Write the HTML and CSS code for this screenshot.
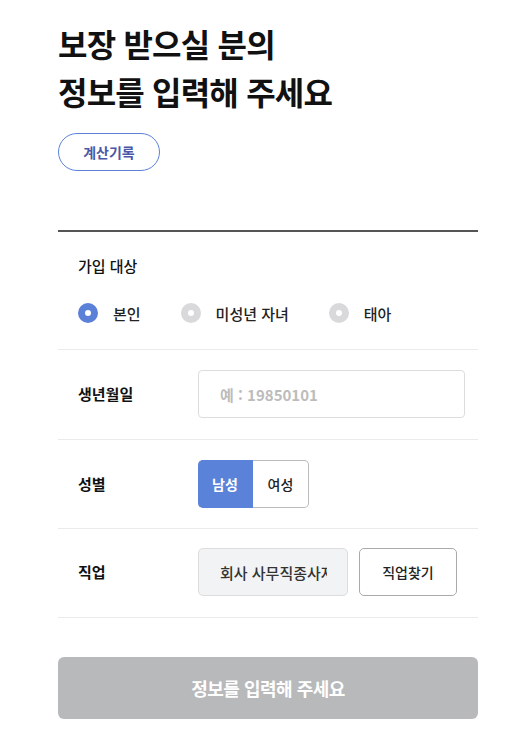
FILE: index.html
```html
<!DOCTYPE html>
<html lang="ko">
<head>
<meta charset="utf-8">
<link rel="stylesheet" href="styles.css">
</head>
<body>
<div class="page">
  <h1 class="title">보장 받으실 분의<br>정보를 입력해 주세요</h1>
  <button class="history">계산기록</button>

  <div class="form">
    <div class="row row-target">
      <div class="label">가입 대상</div>
      <div class="radios">
        <label class="radio on"><span class="dot"></span>본인</label>
        <label class="radio"><span class="dot"></span>미성년 자녀</label>
        <label class="radio"><span class="dot"></span>태아</label>
      </div>
    </div>
    <div class="row">
      <div class="label bold">생년월일</div>
      <div class="input">예 : 19850101</div>
    </div>
    <div class="row row-tight">
      <div class="label bold">성별</div>
      <div class="seg">
        <span class="seg-item active">남성</span>
        <span class="seg-item">여성</span>
      </div>
    </div>
    <div class="row row-job">
      <div class="label bold">직업</div>
      <div class="job">
        <div class="job-input"><span>회사 사무직종사자</span></div>
        <button class="job-btn">직업찾기</button>
      </div>
    </div>
  </div>

  <button class="submit">정보를 입력해 주세요</button>
</div>
</body>
</html>
```

FILE: styles.css
```css
* { box-sizing: border-box; }
html, body { margin: 0; padding: 0; background: #fff; }
body {
  font-family: "Noto Sans CJK KR", "Noto Sans", sans-serif;
  color: #111;
}
.page {
  width: 420px;
  margin-left: 58px;
  padding-top: 19px;
}
.title {
  margin: 0;
  font-size: 32px;
  line-height: 48px;
  font-weight: 700;
  color: #111;
  letter-spacing: -0.8px;
}
.history {
  margin-top: 18px;
  width: 102px;
  height: 38px;
  border: 1px solid #5b82d9;
  border-radius: 19px;
  background: #fff;
  color: #4a57a8;
  font-family: inherit;
  font-size: 14px;
  font-weight: 700;
  padding: 0;
  display: block;
}
.form {
  margin-top: 59px;
  border-top: 2px solid #555;
}
.row {
  display: flex;
  align-items: center;
  padding: 20px 0 21px 20px;
  border-bottom: 1px solid #ebebeb;
}
.row-tight { padding: 20px 0 20px 20px; }
.row-job { padding: 19px 0 21px 20px; }
.row-target {
  display: block;
  padding: 24px 0 25px 20px;
}
.label {
  width: 120px;
  flex: none;
  font-size: 15px;
  font-weight: 500;
  line-height: 20px;
  color: #111;
}
.label.bold { font-weight: 700; }
.radios {
  display: flex;
  margin-top: 26px;
  height: 22px;
  align-items: center;
}
.radio {
  display: flex;
  align-items: center;
  font-size: 15px;
  font-weight: 500;
  color: #222;
  margin-right: 40px;
}
.dot {
  width: 20px;
  height: 20px;
  border-radius: 50%;
  background: #d9d9dc;
  margin-right: 15px;
  position: relative;
}
.dot::after {
  content: "";
  position: absolute;
  left: 7px;
  top: 7px;
  width: 6px;
  height: 6px;
  border-radius: 50%;
  background: #fff;
}
.radio.on .dot { background: #5b80d8; }
.input {
  width: 267px;
  height: 48px;
  border: 1px solid #ddd;
  border-radius: 4px;
  padding-left: 21px;
  display: flex;
  align-items: center;
  font-size: 15px;
  font-weight: 700;
  color: #bcbcbc;
}
.seg {
  display: flex;
  height: 48px;
}
.seg-item {
  width: 56px;
  display: flex;
  align-items: center;
  justify-content: center;
  font-size: 14px;
  font-weight: 500;
  border: 1px solid #bbb;
  color: #222;
  border-radius: 0 5px 5px 0;
  border-left: none;
}
.seg-item.active {
  width: 55px;
  background: #5b82d9;
  border-color: #5b82d9;
  color: #fff;
  font-weight: 700;
  border-radius: 5px 0 0 5px;
}
.job {
  display: flex;
  gap: 11px;
}
.job-input {
  width: 150px;
  height: 48px;
  background: #f2f3f5;
  border: 1px solid #ddd;
  border-radius: 5px;
  padding: 0 0 0 21px;
  display: flex;
  align-items: center;
  overflow: hidden;
  font-size: 15px;
  font-weight: 500;
  color: #333;
  white-space: nowrap;
}
.job-input span {
  display: block;
  width: 107px;
  flex: none;
  overflow: hidden;
}
.job-btn {
  width: 98px;
  height: 48px;
  background: #fff;
  border: 1px solid #aaa;
  border-radius: 5px;
  font-family: inherit;
  font-size: 14px;
  font-weight: 500;
  color: #222;
  padding: 0;
}
.submit {
  display: block;
  margin-top: 39px;
  width: 420px;
  height: 62px;
  border: none;
  border-radius: 6px;
  background: #b8b9bb;
  color: #fff;
  font-family: inherit;
  font-size: 18px;
  letter-spacing: -0.5px;
  font-weight: 700;
}
```
